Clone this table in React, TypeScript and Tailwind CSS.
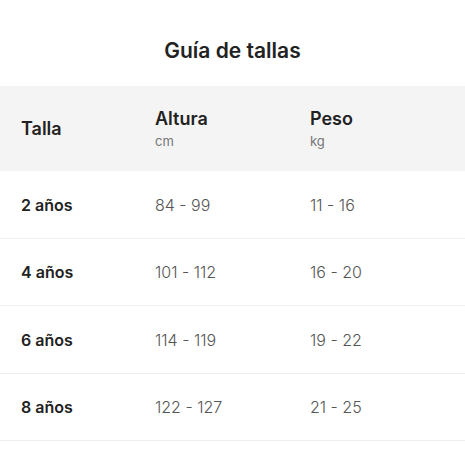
const rows = [
  { talla: "2 años", altura: "84 - 99", peso: "11 - 16" },
  { talla: "4 años", altura: "101 - 112", peso: "16 - 20" },
  { talla: "6 años", altura: "114 - 119", peso: "19 - 22" },
  { talla: "8 años", altura: "122 - 127", peso: "21 - 25" },
];

const App = () => {
  return (
    <div
      className="w-[465px] h-[465px] bg-white text-[#222] overflow-hidden"
      style={{ fontFamily: "Inter, 'Open Sans', sans-serif" }}
    >
      <h1 className="h-[86px] pt-[36px] text-center text-[21px] leading-[30px] font-semibold">
        Guía de tallas
      </h1>

      <div className="h-[85px] bg-[#f4f4f4] grid grid-cols-[134px_155px_1fr] items-center px-[21px]">
        <div className="text-[18px] font-semibold">Talla</div>
        <div className="flex flex-col">
          <span className="text-[18px] font-semibold leading-[24px]">Altura</span>
          <span className="text-[13px] text-[#777] leading-[20px]">cm</span>
        </div>
        <div className="flex flex-col">
          <span className="text-[18px] font-semibold leading-[24px]">Peso</span>
          <span className="text-[13px] text-[#777] leading-[20px]">kg</span>
        </div>
      </div>

      {rows.map((r) => (
        <div
          key={r.talla}
          className="h-[67.5px] pt-px grid grid-cols-[134px_155px_1fr] items-center px-[21px] border-b border-[#eeeeee]"
        >
          <div className="text-[16px] font-semibold">{r.talla}</div>
          <div className="text-[16px] font-light text-[#555]">{r.altura}</div>
          <div className="text-[16px] font-light text-[#555]">{r.peso}</div>
        </div>
      ))}
    </div>
  );
};

export default App;
